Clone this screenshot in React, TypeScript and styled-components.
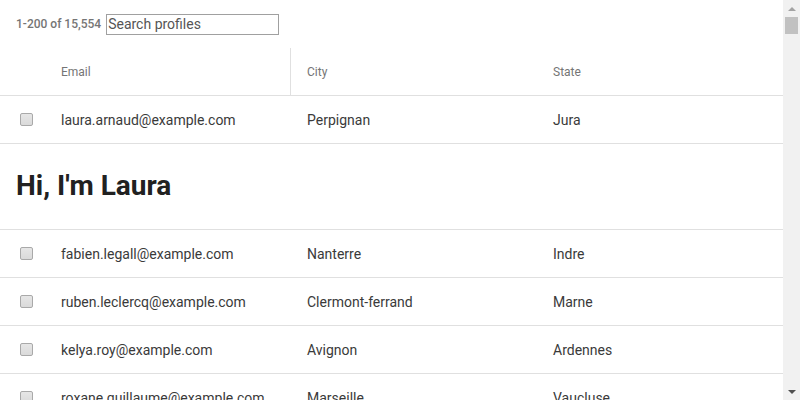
import React from "react";
import styled, { createGlobalStyle } from "styled-components";

interface Profile {
  email: string;
  city: string;
  state: string;
}

const GlobalStyle = createGlobalStyle`
  body {
    margin: 0;
    background: #fff;
    font-family: Roboto, "Liberation Sans", Arial, sans-serif;
    color: #333;
    overflow: hidden;
  }
`;

const profiles: Profile[] = [
  { email: "fabien.legall@example.com", city: "Nanterre", state: "Indre" },
  { email: "ruben.leclercq@example.com", city: "Clermont-ferrand", state: "Marne" },
  { email: "kelya.roy@example.com", city: "Avignon", state: "Ardennes" },
  { email: "roxane.guillaume@example.com", city: "Marseille", state: "Vaucluse" },
];

const Shell = styled.div`
  display: flex;
  height: 100vh;
  overflow: hidden;
`;

const List = styled.div`
  flex: 1;
  min-width: 0;
  overflow: hidden;
`;

// classic windows-style scrollbar on the right
const Track = styled.div`
  width: 17px;
  flex-shrink: 0;
  display: flex;
  flex-direction: column;
  background: #f1f1f1;
`;

const Arrow = styled.div<{ $down?: boolean; $dim?: boolean }>`
  height: 17px;
  display: flex;
  align-items: center;
  justify-content: center;
  &::before {
    content: "";
    border-left: 4px solid transparent;
    border-right: 4px solid transparent;
    ${(p) => (p.$down ? "border-top" : "border-bottom")}: 4px solid
      ${(p) => (p.$dim ? "#a3a3a3" : "#505050")};
  }
`;

const Thumb = styled.div`
  height: 17px;
  margin: 0 2px;
  background: #c1c1c1;
`;

const TrackSpace = styled.div`
  flex: 1;
`;

const TopBar = styled.div`
  height: 48px;
  display: flex;
  align-items: center;
  gap: 5px;
  padding-left: 16px;
`;

const Count = styled.span`
  font-size: 12px;
  font-weight: 500;
  color: #757575;
`;

const Search = styled.input`
  width: 173px;
  height: 21px;
  box-sizing: border-box;
  border: 1px solid #a0a0a0;
  padding: 0 1px;
  font-family: inherit;
  font-size: 14px;
  color: #444;
  outline: none;
  &::placeholder {
    color: #555;
  }
`;

const Row = styled.div<{ $head?: boolean }>`
  display: grid;
  grid-template-columns: 45px 246px 246px 1fr;
  height: 48px;
  box-sizing: border-box;
  border-bottom: 1px solid #e0e0e0;
  font-size: ${(p) => (p.$head ? "12px" : "14px")};
  color: ${(p) => (p.$head ? "#757575" : "#3a3a3a")};
`;

const Cell = styled.div<{ $divider?: boolean }>`
  display: flex;
  align-items: center;
  padding-left: 16px;
  white-space: nowrap;
  overflow: hidden;
  border-right: ${(p) => (p.$divider ? "1px solid #e0e0e0" : "none")};
`;

const CheckCell = styled.div`
  display: flex;
  align-items: center;
  padding-left: 20px;
`;

const Check = styled.input.attrs({ type: "checkbox" })`
  appearance: none;
  margin: 0;
  width: 13px;
  height: 13px;
  box-sizing: border-box;
  border: 1px solid #a9a9a9;
  border-radius: 2px;
  background: linear-gradient(#e6e6e6, #dadada);
  &:checked {
    background: #666;
  }
`;

const Intro = styled.div`
  box-sizing: border-box;
  height: 86px;
  padding: 26px 16px 0;
  border-bottom: 1px solid #e0e0e0;
`;

const Heading = styled.h1`
  margin: 0;
  font-size: 28px;
  line-height: 32px;
  font-weight: 700;
  color: #212121;
`;

const ProfileRow = ({ p }: { p: Profile }) => (
  <Row>
    <CheckCell>
      <Check />
    </CheckCell>
    <Cell>{p.email}</Cell>
    <Cell>{p.city}</Cell>
    <Cell>{p.state}</Cell>
  </Row>
);

export default function App() {
  return (
    <Shell>
      <GlobalStyle />
      <List>
        <TopBar>
          <Count>1-200 of 15,554</Count>
          <Search placeholder="Search profiles" />
        </TopBar>
        <Row $head>
          <CheckCell />
          <Cell $divider>Email</Cell>
          <Cell>City</Cell>
          <Cell>State</Cell>
        </Row>
        <ProfileRow p={{ email: "laura.arnaud@example.com", city: "Perpignan", state: "Jura" }} />
        <Intro>
          <Heading>Hi, I'm Laura</Heading>
        </Intro>
        {profiles.map((p) => (
          <ProfileRow key={p.email} p={p} />
        ))}
      </List>
      <Track>
        <Arrow $dim />
        <Thumb />
        <TrackSpace />
        <Arrow $down />
      </Track>
    </Shell>
  );
}
